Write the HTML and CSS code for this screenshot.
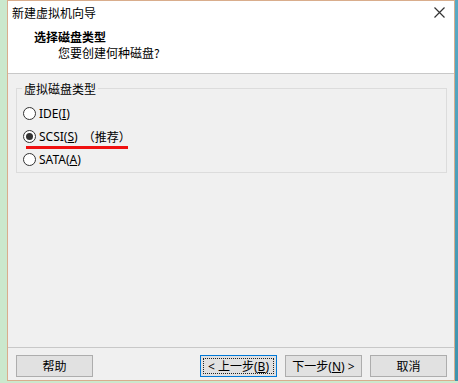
FILE: index.html
```html
<!DOCTYPE html>
<html lang="zh-CN">
<head>
  <meta charset="UTF-8">
  <title>新建虚拟机向导</title>
  <link rel="stylesheet" href="styles.css">
</head>
<body>
<div class="desk">
  <div class="window">
    <div class="head">
      <div class="titlebar">
        <span class="title">新建虚拟机向导</span>
        <span class="close">
          <svg width="11" height="11" viewBox="0 0 11 11"><path d="M0.5 0.5 L10.5 10.5 M10.5 0.5 L0.5 10.5" stroke="#333" stroke-width="1.2" fill="none"/></svg>
        </span>
      </div>
      <div class="step-title">选择磁盘类型</div>
      <div class="step-sub">您要创建何种磁盘?</div>
    </div>

    <div class="content">
      <div class="group">
        <span class="group-label">虚拟磁盘类型</span>
        <div class="option">
          <span class="radio"></span>
          <span>IDE(<u>I</u>)</span>
        </div>
        <div class="option">
          <span class="radio checked"></span>
          <span>SCSI(<u>S</u>)</span>
          <span class="hint">（推荐）</span>
          <span class="mark"></span>
        </div>
        <div class="option">
          <span class="radio"></span>
          <span>SATA(<u>A</u>)</span>
        </div>
      </div>

      <div class="footer">
        <button class="btn">帮助</button>
        <div class="spacer"></div>
        <button class="btn focused"><span class="focus-ring">&lt; 上一步(<u>B</u>)</span></button>
        <button class="btn">下一步(<u>N</u>) &gt;</button>
        <button class="btn">取消</button>
      </div>
    </div>
  </div>
  <div class="edge"></div>
</div>
</body>
</html>
```

FILE: styles.css
```css
* {
  box-sizing: border-box;
}
html, body {
  margin: 0;
  padding: 0;
}
body {
  width: 458px;
  height: 383px;
  overflow: hidden;
  background: #cbe8cd;
  font-family: "Segoe UI", "Noto Sans", "Noto Sans CJK SC", sans-serif;
  font-size: 12px;
  color: #000;
}
.desk {
  display: flex;
  height: 381px;
  padding-left: 7px;
}
.window {
  width: 448px;
  height: 381px;
  border: 1px solid #d9ad8c;
  background: #f0f0f0;
  display: flex;
  flex-direction: column;
}
.edge {
  width: 3px;
  background: linear-gradient(#5aa9c4, #3f93ae);
}
.head {
  background: #fff;
  height: 73px;
  flex-shrink: 0;
  border-bottom: 1px solid #c8c8c8;
}
.titlebar {
  display: flex;
  justify-content: space-between;
  align-items: center;
  height: 23px;
  padding: 0 9px 0 4px;
}
.title {
  font-family: "Noto Sans CJK SC", sans-serif;
  font-size: 12px;
}
.close {
  display: flex;
}
.step-title {
  font-family: "Noto Sans CJK SC", sans-serif;
  font-weight: bold;
  font-size: 12px;
  margin: 5px 0 0 26px;
  line-height: 16px;
}
.step-sub {
  font-family: "Noto Sans CJK SC", sans-serif;
  font-size: 12px;
  margin: 0 0 0 50px;
  line-height: 16px;
}
.content {
  flex: 1;
  display: flex;
  flex-direction: column;
}
.group {
  position: relative;
  margin: 14px 7px 0 8px;
  height: 85px;
  border: 1px solid #dcdcdc;
  padding: 16px 0 0 6px;
  display: flex;
  flex-direction: column;
  gap: 7px;
}
.group-label {
  position: absolute;
  top: -8px;
  left: 5px;
  padding: 0 2px;
  background: #f0f0f0;
  font-family: "Noto Sans CJK SC", sans-serif;
  line-height: 15px;
}
.option {
  position: relative;
  display: flex;
  align-items: center;
  height: 16px;
  gap: 3px;
}
.radio {
  width: 13px;
  height: 13px;
  border: 1px solid #333;
  border-radius: 50%;
  background: #fff;
  display: flex;
  align-items: center;
  justify-content: center;
}
.radio.checked::after {
  content: "";
  width: 7px;
  height: 7px;
  border-radius: 50%;
  background: #333;
}
.hint {
  font-family: "Noto Sans CJK SC", sans-serif;
  margin-left: 2px;
}
.mark {
  position: absolute;
  left: 3px;
  top: 18px;
  width: 102px;
  height: 3px;
  background: #f01010;
}
.footer {
  margin-top: auto;
  border-top: 1px solid #c8c8c8;
  height: 33px;
  flex-shrink: 0;
  display: flex;
  align-items: flex-start;
  padding: 7px 7px 0 8px;
  gap: 8px;
}
.spacer {
  flex: 1;
}
.btn {
  width: 77px;
  height: 22px;
  padding: 0;
  background: #e1e1e1;
  border: 1px solid #adadad;
  font-family: "Segoe UI", "Noto Sans", "Noto Sans CJK SC", sans-serif;
  font-size: 12px;
  color: #000;
  display: flex;
  align-items: center;
  justify-content: center;
}
.btn.focused {
  border-color: #0078d7;
  padding: 2px;
}
.focus-ring {
  flex: 1;
  align-self: stretch;
  display: flex;
  align-items: center;
  justify-content: center;
  border: 1px dotted #222;
}
```
